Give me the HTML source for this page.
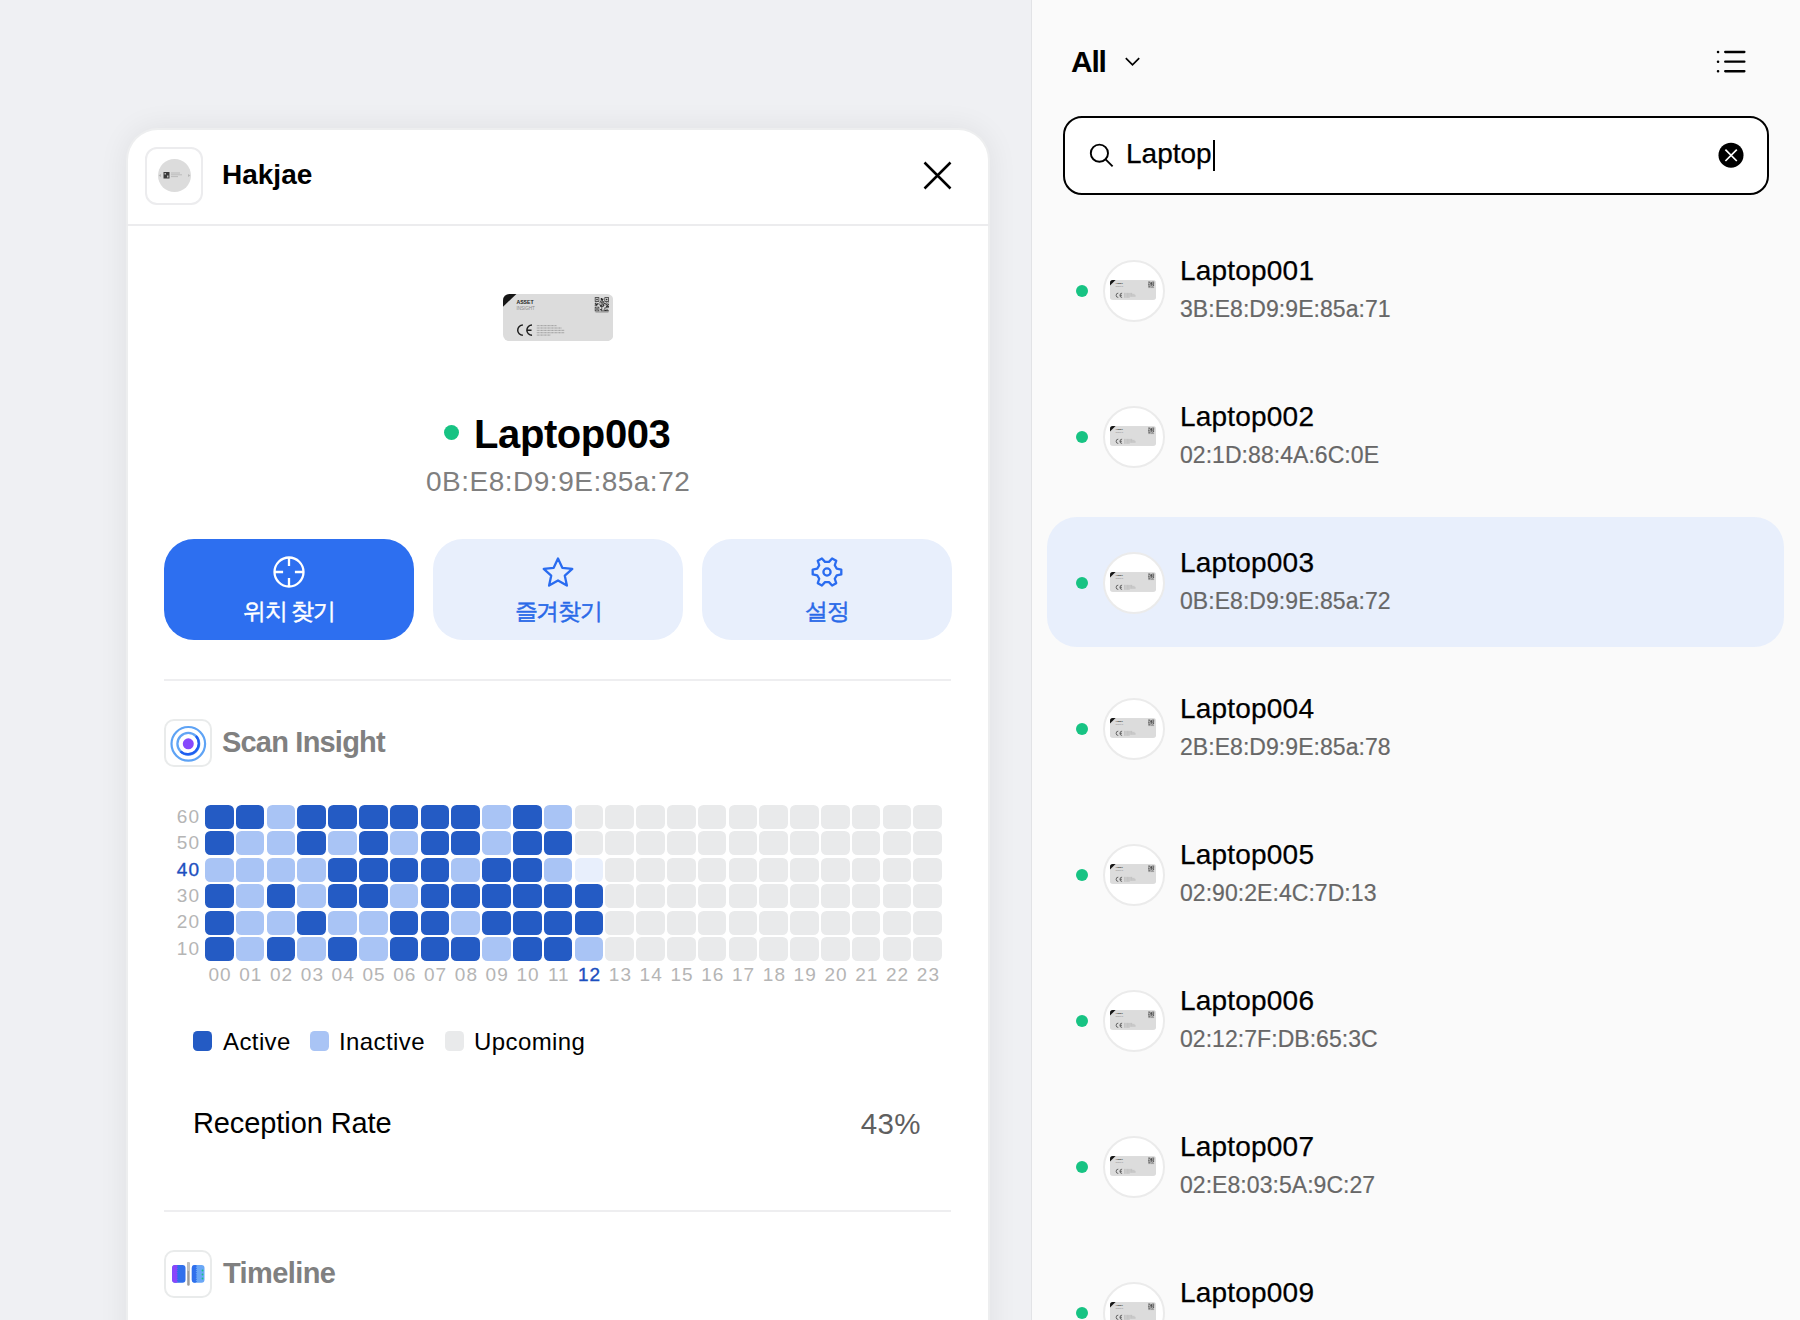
<!DOCTYPE html>
<html><head><meta charset="utf-8">
<style>
*{box-sizing:border-box;margin:0;padding:0}
html,body{width:1800px;height:1320px;overflow:hidden}
body{font-family:"Liberation Sans",sans-serif;background:#eff0f3;position:relative;color:#000}
.abs{position:absolute}
#divider{position:absolute;left:1031px;top:0;width:1px;height:1320px;background:#e2e3e6}
#right{position:absolute;left:1032px;top:0;width:768px;height:1320px;background:#fafafa}
#card{position:absolute;left:128px;top:130px;width:860px;height:1250px;background:#fff;border-radius:30px;box-shadow:0 0 0 2px #edeeef,0 0 30px 2px rgba(0,0,0,0.07)}
.txt{position:absolute;white-space:nowrap;line-height:1}
.btn{position:absolute;top:409px;width:250px;height:101px;border-radius:30px;background:#e8effc;color:#2a6ae8}
.btn.pri{background:#2d6ff0;color:#fff}
.btn .lab{position:absolute;left:0;width:100%;text-align:center;top:61px;font-size:23px;line-height:1;letter-spacing:-1.4px;-webkit-text-stroke:0.5px currentColor}
.btn svg{position:absolute;left:50%;top:17px;margin-left:-17px}
.sep{position:absolute;left:36px;width:787px;height:1.6px;background:#eeeef0}
.secicon{position:absolute;width:48px;height:48px;border:2px solid #e9ebeb;border-radius:10px;background:#fff}
.sectitle{position:absolute;font-size:29px;font-weight:bold;color:#808080;line-height:1;white-space:nowrap;letter-spacing:-0.8px}
.cell{position:absolute;width:28.5px;height:24px;border-radius:5.5px}
.A{background:#245bc4}.I{background:#a9c4f5}.U{background:#e9eaeb}.C{background:#e8effc}
.ylab{position:absolute;left:36px;width:36px;text-align:right;font-size:19px;color:#b5b5b5;line-height:1;letter-spacing:1px}
.xlab{position:absolute;top:835.2px;width:31px;text-align:center;font-size:19px;color:#b5b5b5;line-height:1;letter-spacing:1px;text-indent:1px}
.dot{position:absolute;width:12px;height:12px;border-radius:50%;background:#17c383}
.avatar{position:absolute;width:62px;height:62px;border-radius:50%;background:#fff;border:2px solid #ebebeb;overflow:hidden}
.avatar svg{position:absolute;left:5px;top:18px}
.nm{position:absolute;font-size:28px;color:#000;line-height:1;white-space:nowrap;letter-spacing:0.2px;-webkit-text-stroke:0.25px #000}
.mac{position:absolute;font-size:23px;color:#676767;line-height:1;white-space:nowrap;letter-spacing:0.05px;-webkit-text-stroke:0.2px #676767}
</style></head>
<body>
<svg width="0" height="0" style="position:absolute">
<defs>
<clipPath id="tc"><rect width="111" height="48" rx="6.5"/></clipPath>
<symbol id="tag" viewBox="0 0 111 48">
 <g clip-path="url(#tc)">
  <rect width="111" height="48" fill="#dcdcdc"/>
  <path d="M0 0H13.5L0 13Z" fill="#161616"/>
 </g>
 <text x="13.5" y="10.5" font-size="5.2" font-weight="bold" fill="#222" font-family="Liberation Sans">ASSET</text>
 <text x="13.5" y="16" font-size="4.6" fill="#8a8a8a" font-family="Liberation Sans">INSIGHT</text>
 <path d="M92.30 3.30h4.48v0.75h-4.48zM102.02 3.30h4.48v0.75h-4.48zM92.30 4.05h0.75v0.75h-0.75zM96.04 4.05h0.75v0.75h-0.75zM98.28 4.05h1.49v0.75h-1.49zM102.02 4.05h0.75v0.75h-0.75zM105.75 4.05h0.75v0.75h-0.75zM92.30 4.79h0.75v0.75h-0.75zM93.79 4.79h1.49v0.75h-1.49zM96.04 4.79h0.75v0.75h-0.75zM98.28 4.79h2.99v0.75h-2.99zM102.02 4.79h0.75v0.75h-0.75zM103.51 4.79h1.49v0.75h-1.49zM105.75 4.79h0.75v0.75h-0.75zM92.30 5.54h0.75v0.75h-0.75zM93.79 5.54h1.49v0.75h-1.49zM96.04 5.54h0.75v0.75h-0.75zM98.28 5.54h2.24v0.75h-2.24zM102.02 5.54h0.75v0.75h-0.75zM103.51 5.54h1.49v0.75h-1.49zM105.75 5.54h0.75v0.75h-0.75zM92.30 6.29h0.75v0.75h-0.75zM96.04 6.29h0.75v0.75h-0.75zM98.28 6.29h0.75v0.75h-0.75zM99.77 6.29h0.75v0.75h-0.75zM102.02 6.29h0.75v0.75h-0.75zM105.75 6.29h0.75v0.75h-0.75zM92.30 7.04h4.48v0.75h-4.48zM97.53 7.04h1.49v0.75h-1.49zM99.77 7.04h1.49v0.75h-1.49zM102.02 7.04h4.48v0.75h-4.48zM99.03 7.78h0.75v0.75h-0.75zM100.52 7.78h0.75v0.75h-0.75zM93.05 8.53h0.75v0.75h-0.75zM96.78 8.53h4.48v0.75h-4.48zM102.02 8.53h0.75v0.75h-0.75zM103.51 8.53h1.49v0.75h-1.49zM105.75 8.53h0.75v0.75h-0.75zM92.30 9.28h1.49v0.75h-1.49zM94.54 9.28h0.75v0.75h-0.75zM96.04 9.28h0.75v0.75h-0.75zM98.28 9.28h0.75v0.75h-0.75zM99.77 9.28h0.75v0.75h-0.75zM101.27 9.28h2.24v0.75h-2.24zM104.26 9.28h0.75v0.75h-0.75zM93.05 10.03h2.24v0.75h-2.24zM96.04 10.03h0.75v0.75h-0.75zM99.03 10.03h0.75v0.75h-0.75zM100.52 10.03h1.49v0.75h-1.49zM103.51 10.03h0.75v0.75h-0.75zM105.01 10.03h1.49v0.75h-1.49zM92.30 10.77h2.99v0.75h-2.99zM96.78 10.77h1.49v0.75h-1.49zM99.03 10.77h2.24v0.75h-2.24zM102.76 10.77h2.24v0.75h-2.24zM105.75 10.77h0.75v0.75h-0.75zM92.30 11.52h0.75v0.75h-0.75zM93.79 11.52h0.75v0.75h-0.75zM97.53 11.52h2.24v0.75h-2.24zM100.52 11.52h1.49v0.75h-1.49zM104.26 11.52h1.49v0.75h-1.49zM97.53 12.27h3.74v0.75h-3.74zM103.51 12.27h2.99v0.75h-2.99zM92.30 13.02h4.48v0.75h-4.48zM99.03 13.02h0.75v0.75h-0.75zM103.51 13.02h0.75v0.75h-0.75zM105.01 13.02h1.49v0.75h-1.49zM92.30 13.76h0.75v0.75h-0.75zM96.04 13.76h0.75v0.75h-0.75zM99.03 13.76h0.75v0.75h-0.75zM102.02 13.76h2.24v0.75h-2.24zM105.01 13.76h0.75v0.75h-0.75zM92.30 14.51h0.75v0.75h-0.75zM93.79 14.51h1.49v0.75h-1.49zM96.04 14.51h0.75v0.75h-0.75zM99.03 14.51h0.75v0.75h-0.75zM102.02 14.51h0.75v0.75h-0.75zM92.30 15.26h0.75v0.75h-0.75zM93.79 15.26h1.49v0.75h-1.49zM96.04 15.26h0.75v0.75h-0.75zM97.53 15.26h2.24v0.75h-2.24zM101.27 15.26h0.75v0.75h-0.75zM104.26 15.26h0.75v0.75h-0.75zM92.30 16.01h0.75v0.75h-0.75zM96.04 16.01h0.75v0.75h-0.75zM98.28 16.01h0.75v0.75h-0.75zM102.02 16.01h2.24v0.75h-2.24zM105.01 16.01h0.75v0.75h-0.75zM92.30 16.75h4.48v0.75h-4.48zM98.28 16.75h8.22v0.75h-8.22z" fill="#2a2a2a"/>
 <path d="M93 18.3h13" stroke="#777" stroke-width="0.8"/>
 <path d="M20 31.6A5.2 5.2 0 0 0 20 42M29.2 31.6A5.2 5.2 0 0 0 29.2 42M24.3 36.8h4.4" stroke="#1e1e1e" stroke-width="1.5" fill="none"/>
 <path d="M34 32.2h20M34 34.6h25M34 37h28M34 39.4h28M34 41.8h14" stroke="#5a5a5a" stroke-width="0.55" stroke-dasharray="0.9 0.5"/>
</symbol>
</defs></svg>

<div id="divider"></div>
<div id="right"></div>

<div id="card">
  <div class="abs" style="left:17px;top:17px;width:58px;height:58px;border:2px solid #ececee;border-radius:12px;background:#fff">
    <svg class="abs" style="left:10.5px;top:10px" width="33" height="33" viewBox="0 0 33 33">
      <circle cx="16.5" cy="16.5" r="16.5" fill="#dcdcdc"/>
      <path d="M5.5 13h6v6.5h-6z" fill="#3a3a3a"/><path d="M6.5 14h1.5v1.5h-1.5zM9 16.5h1.5v2h-1.5z" fill="#bbb"/>
      <path d="M13 14h9M13 15.8h11M13 17.6h7" stroke="#9a9a9a" stroke-width="0.5"/>
      <path d="M1.2 16.5l1.4-1.4v2.8zM31.8 16.5l-1.4-1.4v2.8z" fill="#a0a0a0"/>
    </svg>
  </div>
  <div class="txt" style="left:94px;top:31px;font-size:28px;font-weight:bold">Hakjae</div>
  <svg class="abs" style="left:794px;top:30px" width="32" height="32" viewBox="0 0 32 32"><path d="M2.5 2.5L28.5 28.5M28.5 2.5L2.5 28.5" stroke="#000" stroke-width="2.5" fill="none"/></svg>
  <div class="abs" style="left:-2px;top:94px;width:864px;height:2px;background:#ececee"></div>

  <svg class="abs" style="left:374.6px;top:163.7px" width="110.4" height="47.2" viewBox="0 0 111 48" preserveAspectRatio="none"><use href="#tag"/></svg>

  <div class="dot" style="left:316px;top:295px;width:15px;height:15px"></div>
  <div class="txt" style="left:346px;top:284px;font-size:40px;font-weight:bold;letter-spacing:-0.4px">Laptop003</div>
  <div class="txt" style="left:298px;top:337.5px;font-size:28px;color:#7f7f7f;letter-spacing:0.5px">0B:E8:D9:9E:85a:72</div>

  <div class="btn pri" style="left:36px">
    <svg width="34" height="34" viewBox="0 0 34 34" style="top:16.3px"><circle cx="17" cy="17" r="14.5" stroke="#fff" stroke-width="2.3" fill="none"/><path d="M17 2.5v8.6M17 22.9v8.6M2.5 17h8.6M22.9 17h8.6" stroke="#fff" stroke-width="2.3"/></svg>
    <div class="lab">위치 찾기</div>
  </div>
  <div class="btn" style="left:305px">
    <svg width="34" height="34" viewBox="0 0 34 34"><path d="M17 2.5l4.3 9.3 10 1.1-7.5 6.8 2.1 9.9L17 24.5l-8.9 5.1 2.1-9.9-7.5-6.8 10-1.1z" stroke="#2a6cf0" stroke-width="2.3" fill="none" stroke-linejoin="round"/></svg>
    <div class="lab">즐겨찾기</div>
  </div>
  <div class="btn" style="left:574px">
    <svg width="34" height="34" viewBox="0 0 34 34" style="top:16.2px"><path d="M26.74 20.35 L31.30 19.39 L31.30 14.61 L26.74 13.65 L24.77 10.24 L26.22 5.81 L22.08 3.42 L18.97 6.89 L15.03 6.89 L11.92 3.42 L7.78 5.81 L9.23 10.24 L7.26 13.65 L2.70 14.61 L2.70 19.39 L7.26 20.35 L9.23 23.76 L7.78 28.19 L11.92 30.58 L15.03 27.11 L18.97 27.11 L22.08 30.58 L26.22 28.19 L24.77 23.76 Z" stroke="#2a6cf0" stroke-width="2.3" fill="none" stroke-linejoin="round"/><circle cx="17" cy="17" r="3.6" stroke="#2a6cf0" stroke-width="2.3" fill="none"/></svg>
    <div class="lab">설정</div>
  </div>

  <div class="sep" style="top:549px"></div>

  <div class="secicon" style="left:36px;top:589px">
    <svg class="abs" style="left:0;top:0" width="44" height="44" viewBox="0 0 44 44">
      <circle cx="22.3" cy="22.8" r="16.8" stroke="#5ea3f5" stroke-width="2.2" fill="none"/>
      <circle cx="22.3" cy="22.8" r="10.9" stroke="#62a5f5" stroke-width="2.3" fill="none"/>
      <path d="M29.9 15A10.9 10.9 0 0 1 14.5 30.4" stroke="#1f5ff0" stroke-width="2.3" fill="none"/>
      <circle cx="22.3" cy="22.8" r="5.5" fill="#8748fc"/>
    </svg>
  </div>
  <div class="sectitle" style="left:94px;top:598px">Scan Insight</div>

  <div class="ylab" style="top:676.7px;">60</div>
<div class="cell A" style="left:77.0px;top:675.0px"></div><div class="cell A" style="left:107.8px;top:675.0px"></div><div class="cell I" style="left:138.6px;top:675.0px"></div><div class="cell A" style="left:169.4px;top:675.0px"></div><div class="cell A" style="left:200.2px;top:675.0px"></div><div class="cell A" style="left:231.0px;top:675.0px"></div><div class="cell A" style="left:261.8px;top:675.0px"></div><div class="cell A" style="left:292.6px;top:675.0px"></div><div class="cell A" style="left:323.4px;top:675.0px"></div><div class="cell I" style="left:354.2px;top:675.0px"></div><div class="cell A" style="left:385.0px;top:675.0px"></div><div class="cell I" style="left:415.8px;top:675.0px"></div><div class="cell U" style="left:446.6px;top:675.0px"></div><div class="cell U" style="left:477.4px;top:675.0px"></div><div class="cell U" style="left:508.2px;top:675.0px"></div><div class="cell U" style="left:539.0px;top:675.0px"></div><div class="cell U" style="left:569.8px;top:675.0px"></div><div class="cell U" style="left:600.6px;top:675.0px"></div><div class="cell U" style="left:631.4px;top:675.0px"></div><div class="cell U" style="left:662.2px;top:675.0px"></div><div class="cell U" style="left:693.0px;top:675.0px"></div><div class="cell U" style="left:723.8px;top:675.0px"></div><div class="cell U" style="left:754.6px;top:675.0px"></div><div class="cell U" style="left:785.4px;top:675.0px"></div>
<div class="ylab" style="top:703.1px;">50</div>
<div class="cell A" style="left:77.0px;top:701.4px"></div><div class="cell I" style="left:107.8px;top:701.4px"></div><div class="cell I" style="left:138.6px;top:701.4px"></div><div class="cell A" style="left:169.4px;top:701.4px"></div><div class="cell I" style="left:200.2px;top:701.4px"></div><div class="cell A" style="left:231.0px;top:701.4px"></div><div class="cell I" style="left:261.8px;top:701.4px"></div><div class="cell A" style="left:292.6px;top:701.4px"></div><div class="cell A" style="left:323.4px;top:701.4px"></div><div class="cell I" style="left:354.2px;top:701.4px"></div><div class="cell A" style="left:385.0px;top:701.4px"></div><div class="cell A" style="left:415.8px;top:701.4px"></div><div class="cell U" style="left:446.6px;top:701.4px"></div><div class="cell U" style="left:477.4px;top:701.4px"></div><div class="cell U" style="left:508.2px;top:701.4px"></div><div class="cell U" style="left:539.0px;top:701.4px"></div><div class="cell U" style="left:569.8px;top:701.4px"></div><div class="cell U" style="left:600.6px;top:701.4px"></div><div class="cell U" style="left:631.4px;top:701.4px"></div><div class="cell U" style="left:662.2px;top:701.4px"></div><div class="cell U" style="left:693.0px;top:701.4px"></div><div class="cell U" style="left:723.8px;top:701.4px"></div><div class="cell U" style="left:754.6px;top:701.4px"></div><div class="cell U" style="left:785.4px;top:701.4px"></div>
<div class="ylab" style="top:729.5px;color:#1d4fbf;-webkit-text-stroke:0.35px #1d4fbf">40</div>
<div class="cell I" style="left:77.0px;top:727.8px"></div><div class="cell I" style="left:107.8px;top:727.8px"></div><div class="cell I" style="left:138.6px;top:727.8px"></div><div class="cell I" style="left:169.4px;top:727.8px"></div><div class="cell A" style="left:200.2px;top:727.8px"></div><div class="cell A" style="left:231.0px;top:727.8px"></div><div class="cell A" style="left:261.8px;top:727.8px"></div><div class="cell A" style="left:292.6px;top:727.8px"></div><div class="cell I" style="left:323.4px;top:727.8px"></div><div class="cell A" style="left:354.2px;top:727.8px"></div><div class="cell A" style="left:385.0px;top:727.8px"></div><div class="cell I" style="left:415.8px;top:727.8px"></div><div class="cell C" style="left:446.6px;top:727.8px"></div><div class="cell U" style="left:477.4px;top:727.8px"></div><div class="cell U" style="left:508.2px;top:727.8px"></div><div class="cell U" style="left:539.0px;top:727.8px"></div><div class="cell U" style="left:569.8px;top:727.8px"></div><div class="cell U" style="left:600.6px;top:727.8px"></div><div class="cell U" style="left:631.4px;top:727.8px"></div><div class="cell U" style="left:662.2px;top:727.8px"></div><div class="cell U" style="left:693.0px;top:727.8px"></div><div class="cell U" style="left:723.8px;top:727.8px"></div><div class="cell U" style="left:754.6px;top:727.8px"></div><div class="cell U" style="left:785.4px;top:727.8px"></div>
<div class="ylab" style="top:755.9px;">30</div>
<div class="cell A" style="left:77.0px;top:754.2px"></div><div class="cell I" style="left:107.8px;top:754.2px"></div><div class="cell A" style="left:138.6px;top:754.2px"></div><div class="cell I" style="left:169.4px;top:754.2px"></div><div class="cell A" style="left:200.2px;top:754.2px"></div><div class="cell A" style="left:231.0px;top:754.2px"></div><div class="cell I" style="left:261.8px;top:754.2px"></div><div class="cell A" style="left:292.6px;top:754.2px"></div><div class="cell A" style="left:323.4px;top:754.2px"></div><div class="cell A" style="left:354.2px;top:754.2px"></div><div class="cell A" style="left:385.0px;top:754.2px"></div><div class="cell A" style="left:415.8px;top:754.2px"></div><div class="cell A" style="left:446.6px;top:754.2px"></div><div class="cell U" style="left:477.4px;top:754.2px"></div><div class="cell U" style="left:508.2px;top:754.2px"></div><div class="cell U" style="left:539.0px;top:754.2px"></div><div class="cell U" style="left:569.8px;top:754.2px"></div><div class="cell U" style="left:600.6px;top:754.2px"></div><div class="cell U" style="left:631.4px;top:754.2px"></div><div class="cell U" style="left:662.2px;top:754.2px"></div><div class="cell U" style="left:693.0px;top:754.2px"></div><div class="cell U" style="left:723.8px;top:754.2px"></div><div class="cell U" style="left:754.6px;top:754.2px"></div><div class="cell U" style="left:785.4px;top:754.2px"></div>
<div class="ylab" style="top:782.3px;">20</div>
<div class="cell A" style="left:77.0px;top:780.6px"></div><div class="cell I" style="left:107.8px;top:780.6px"></div><div class="cell I" style="left:138.6px;top:780.6px"></div><div class="cell A" style="left:169.4px;top:780.6px"></div><div class="cell I" style="left:200.2px;top:780.6px"></div><div class="cell I" style="left:231.0px;top:780.6px"></div><div class="cell A" style="left:261.8px;top:780.6px"></div><div class="cell A" style="left:292.6px;top:780.6px"></div><div class="cell I" style="left:323.4px;top:780.6px"></div><div class="cell A" style="left:354.2px;top:780.6px"></div><div class="cell A" style="left:385.0px;top:780.6px"></div><div class="cell A" style="left:415.8px;top:780.6px"></div><div class="cell A" style="left:446.6px;top:780.6px"></div><div class="cell U" style="left:477.4px;top:780.6px"></div><div class="cell U" style="left:508.2px;top:780.6px"></div><div class="cell U" style="left:539.0px;top:780.6px"></div><div class="cell U" style="left:569.8px;top:780.6px"></div><div class="cell U" style="left:600.6px;top:780.6px"></div><div class="cell U" style="left:631.4px;top:780.6px"></div><div class="cell U" style="left:662.2px;top:780.6px"></div><div class="cell U" style="left:693.0px;top:780.6px"></div><div class="cell U" style="left:723.8px;top:780.6px"></div><div class="cell U" style="left:754.6px;top:780.6px"></div><div class="cell U" style="left:785.4px;top:780.6px"></div>
<div class="ylab" style="top:808.7px;">10</div>
<div class="cell A" style="left:77.0px;top:807.0px"></div><div class="cell I" style="left:107.8px;top:807.0px"></div><div class="cell A" style="left:138.6px;top:807.0px"></div><div class="cell I" style="left:169.4px;top:807.0px"></div><div class="cell A" style="left:200.2px;top:807.0px"></div><div class="cell I" style="left:231.0px;top:807.0px"></div><div class="cell A" style="left:261.8px;top:807.0px"></div><div class="cell A" style="left:292.6px;top:807.0px"></div><div class="cell A" style="left:323.4px;top:807.0px"></div><div class="cell I" style="left:354.2px;top:807.0px"></div><div class="cell A" style="left:385.0px;top:807.0px"></div><div class="cell A" style="left:415.8px;top:807.0px"></div><div class="cell I" style="left:446.6px;top:807.0px"></div><div class="cell U" style="left:477.4px;top:807.0px"></div><div class="cell U" style="left:508.2px;top:807.0px"></div><div class="cell U" style="left:539.0px;top:807.0px"></div><div class="cell U" style="left:569.8px;top:807.0px"></div><div class="cell U" style="left:600.6px;top:807.0px"></div><div class="cell U" style="left:631.4px;top:807.0px"></div><div class="cell U" style="left:662.2px;top:807.0px"></div><div class="cell U" style="left:693.0px;top:807.0px"></div><div class="cell U" style="left:723.8px;top:807.0px"></div><div class="cell U" style="left:754.6px;top:807.0px"></div><div class="cell U" style="left:785.4px;top:807.0px"></div>
<div class="xlab" style="left:76.0px;">00</div><div class="xlab" style="left:106.8px;">01</div><div class="xlab" style="left:137.6px;">02</div><div class="xlab" style="left:168.4px;">03</div><div class="xlab" style="left:199.2px;">04</div><div class="xlab" style="left:230.0px;">05</div><div class="xlab" style="left:260.8px;">06</div><div class="xlab" style="left:291.6px;">07</div><div class="xlab" style="left:322.4px;">08</div><div class="xlab" style="left:353.2px;">09</div><div class="xlab" style="left:384.0px;">10</div><div class="xlab" style="left:414.8px;">11</div><div class="xlab" style="left:445.6px;color:#1d4fbf;-webkit-text-stroke:0.35px #1d4fbf">12</div><div class="xlab" style="left:476.4px;">13</div><div class="xlab" style="left:507.2px;">14</div><div class="xlab" style="left:538.0px;">15</div><div class="xlab" style="left:568.8px;">16</div><div class="xlab" style="left:599.6px;">17</div><div class="xlab" style="left:630.4px;">18</div><div class="xlab" style="left:661.2px;">19</div><div class="xlab" style="left:692.0px;">20</div><div class="xlab" style="left:722.8px;">21</div><div class="xlab" style="left:753.6px;">22</div><div class="xlab" style="left:784.4px;">23</div>

  <div class="abs" style="left:65px;top:901px;width:19px;height:19.5px;border-radius:4.5px;background:#245bc4"></div>
  <div class="txt" style="left:95px;top:900px;font-size:24px;letter-spacing:0.4px">Active</div>
  <div class="abs" style="left:182px;top:901px;width:19px;height:19.5px;border-radius:4.5px;background:#a9c4f5"></div>
  <div class="txt" style="left:211px;top:900px;font-size:24px;letter-spacing:0.4px">Inactive</div>
  <div class="abs" style="left:317px;top:901px;width:19px;height:19.5px;border-radius:4.5px;background:#e9eaeb"></div>
  <div class="txt" style="left:346px;top:900px;font-size:24px;letter-spacing:0.4px">Upcoming</div>

  <div class="txt" style="left:65px;top:979px;font-size:29px;letter-spacing:-0.1px">Reception Rate</div>
  <div class="txt" style="left:633px;width:160px;text-align:right;top:978.5px;font-size:29.5px;color:#5f5f5f;letter-spacing:0.4px">43%</div>

  <div class="sep" style="top:1080px"></div>
  <div class="secicon" style="left:36px;top:1120px">
    <svg class="abs" style="left:0;top:0" width="44" height="44" viewBox="0 0 44 44">
      <defs><clipPath id="lb"><rect x="6.1" y="13" width="13.4" height="17.8" rx="3"/></clipPath><clipPath id="rb"><rect x="25.8" y="13" width="12.7" height="17.8" rx="3"/></clipPath></defs>
      <g clip-path="url(#lb)"><rect x="0" y="0" width="44" height="44" fill="#2f6fec"/><path d="M0 0H10.60 L10.60 13.00 L12.00 14.10 L10.60 15.20 L12.00 16.30 L10.60 17.40 L12.00 18.50 L10.60 19.60 L12.00 20.70 L10.60 21.80 L12.00 22.90 L10.60 24.00 L12.00 25.10 L10.60 26.20 L12.00 27.30 L10.60 28.40 L12.00 29.50 L10.60 30.60 L10.60 30.80 V44H0Z" fill="#8a45fb"/></g>
      <rect x="21.2" y="10" width="2.5" height="23.7" rx="1.25" fill="#9c9c9c"/>
      <rect x="21.2" y="10" width="2.5" height="9" rx="1.25" fill="#c0c0c0"/>
      <g clip-path="url(#rb)"><rect x="0" y="0" width="44" height="44" fill="#6aa7f6"/><path d="M0 0H29.60 L29.60 13.00 L31.20 14.10 L29.60 15.20 L31.20 16.30 L29.60 17.40 L31.20 18.50 L29.60 19.60 L31.20 20.70 L29.60 21.80 L31.20 22.90 L29.60 24.00 L31.20 25.10 L29.60 26.20 L31.20 27.30 L29.60 28.40 L31.20 29.50 L29.60 30.60 L29.60 30.80 V44H0Z" fill="#2f6fec"/></g>
      <circle cx="36.5" cy="18.5" r="0.9" fill="#16c57f"/><circle cx="36.5" cy="22.5" r="0.9" fill="#16c57f"/><circle cx="36.5" cy="26.5" r="0.9" fill="#16c57f"/>
    </svg>
  
  </div>
  <div class="sectitle" style="left:95px;top:1129px;letter-spacing:-0.6px">Timeline</div>
</div>

<div class="txt" style="left:1071px;top:47px;font-size:30px;font-weight:bold;letter-spacing:-1.2px">All</div>
<svg class="abs" style="left:1124px;top:55px" width="18" height="12" viewBox="0 0 18 12"><path d="M1.8 3.2l6.7 6.7 6.7-6.7" stroke="#000" stroke-width="1.7" fill="none"/></svg>
<svg class="abs" style="left:1714px;top:48px" width="34" height="28" viewBox="0 0 34 28"><path d="M11.2 4h19.2M11.2 13.7h19.2M11.2 23.25h19.2" stroke="#000" stroke-width="2.3" stroke-linecap="round"/><path d="M4 4h0.1M4 13.7h0.1M4 23.25h0.1" stroke="#000" stroke-width="2.5" stroke-linecap="round"/></svg>

<div class="abs" style="left:1063px;top:116px;width:706px;height:79px;border:2px solid #000;border-radius:19px;background:#fff"></div>
<svg class="abs" style="left:1088px;top:142px" width="28" height="28" viewBox="0 0 28 28"><circle cx="11.4" cy="11.2" r="8.6" stroke="#000" stroke-width="1.9" fill="none"/><path d="M17.6 17.4l7 7" stroke="#000" stroke-width="1.9"/></svg>
<div class="txt" style="left:1126px;top:140px;font-size:28px;-webkit-text-stroke:0.25px #000">Laptop</div>
<div class="abs" style="left:1213.3px;top:140px;width:2.2px;height:31px;background:#000"></div>
<svg class="abs" style="left:1717px;top:141px" width="28" height="28" viewBox="0 0 28 28"><circle cx="14" cy="14.2" r="12.5" fill="#000"/><path d="M8.4 8.6l11.4 11.4M19.8 8.6l-11.4 11.4" stroke="#fff" stroke-width="1.7"/></svg>

<div class="dot" style="left:1076px;top:285px"></div><div class="avatar" style="left:1103px;top:260px"><svg width="46" height="20" viewBox="0 0 111 48"><use href="#tag"/></svg></div><div class="nm" style="left:1180px;top:257px">Laptop001</div><div class="mac" style="left:1180px;top:298px">3B:E8:D9:9E:85a:71</div>
<div class="dot" style="left:1076px;top:431px"></div><div class="avatar" style="left:1103px;top:406px"><svg width="46" height="20" viewBox="0 0 111 48"><use href="#tag"/></svg></div><div class="nm" style="left:1180px;top:403px">Laptop002</div><div class="mac" style="left:1180px;top:444px">02:1D:88:4A:6C:0E</div>
<div class="abs" style="left:1047px;top:517px;width:737px;height:130px;border-radius:30px;background:#e8effc"></div>
<div class="dot" style="left:1076px;top:577px"></div><div class="avatar" style="left:1103px;top:552px"><svg width="46" height="20" viewBox="0 0 111 48"><use href="#tag"/></svg></div><div class="nm" style="left:1180px;top:549px">Laptop003</div><div class="mac" style="left:1180px;top:590px">0B:E8:D9:9E:85a:72</div>
<div class="dot" style="left:1076px;top:723px"></div><div class="avatar" style="left:1103px;top:698px"><svg width="46" height="20" viewBox="0 0 111 48"><use href="#tag"/></svg></div><div class="nm" style="left:1180px;top:695px">Laptop004</div><div class="mac" style="left:1180px;top:736px">2B:E8:D9:9E:85a:78</div>
<div class="dot" style="left:1076px;top:869px"></div><div class="avatar" style="left:1103px;top:844px"><svg width="46" height="20" viewBox="0 0 111 48"><use href="#tag"/></svg></div><div class="nm" style="left:1180px;top:841px">Laptop005</div><div class="mac" style="left:1180px;top:882px">02:90:2E:4C:7D:13</div>
<div class="dot" style="left:1076px;top:1015px"></div><div class="avatar" style="left:1103px;top:990px"><svg width="46" height="20" viewBox="0 0 111 48"><use href="#tag"/></svg></div><div class="nm" style="left:1180px;top:987px">Laptop006</div><div class="mac" style="left:1180px;top:1028px">02:12:7F:DB:65:3C</div>
<div class="dot" style="left:1076px;top:1161px"></div><div class="avatar" style="left:1103px;top:1136px"><svg width="46" height="20" viewBox="0 0 111 48"><use href="#tag"/></svg></div><div class="nm" style="left:1180px;top:1133px">Laptop007</div><div class="mac" style="left:1180px;top:1174px">02:E8:03:5A:9C:27</div>
<div class="dot" style="left:1076px;top:1307px"></div><div class="avatar" style="left:1103px;top:1282px"><svg width="46" height="20" viewBox="0 0 111 48"><use href="#tag"/></svg></div><div class="nm" style="left:1180px;top:1279px">Laptop009</div>

</body></html>
